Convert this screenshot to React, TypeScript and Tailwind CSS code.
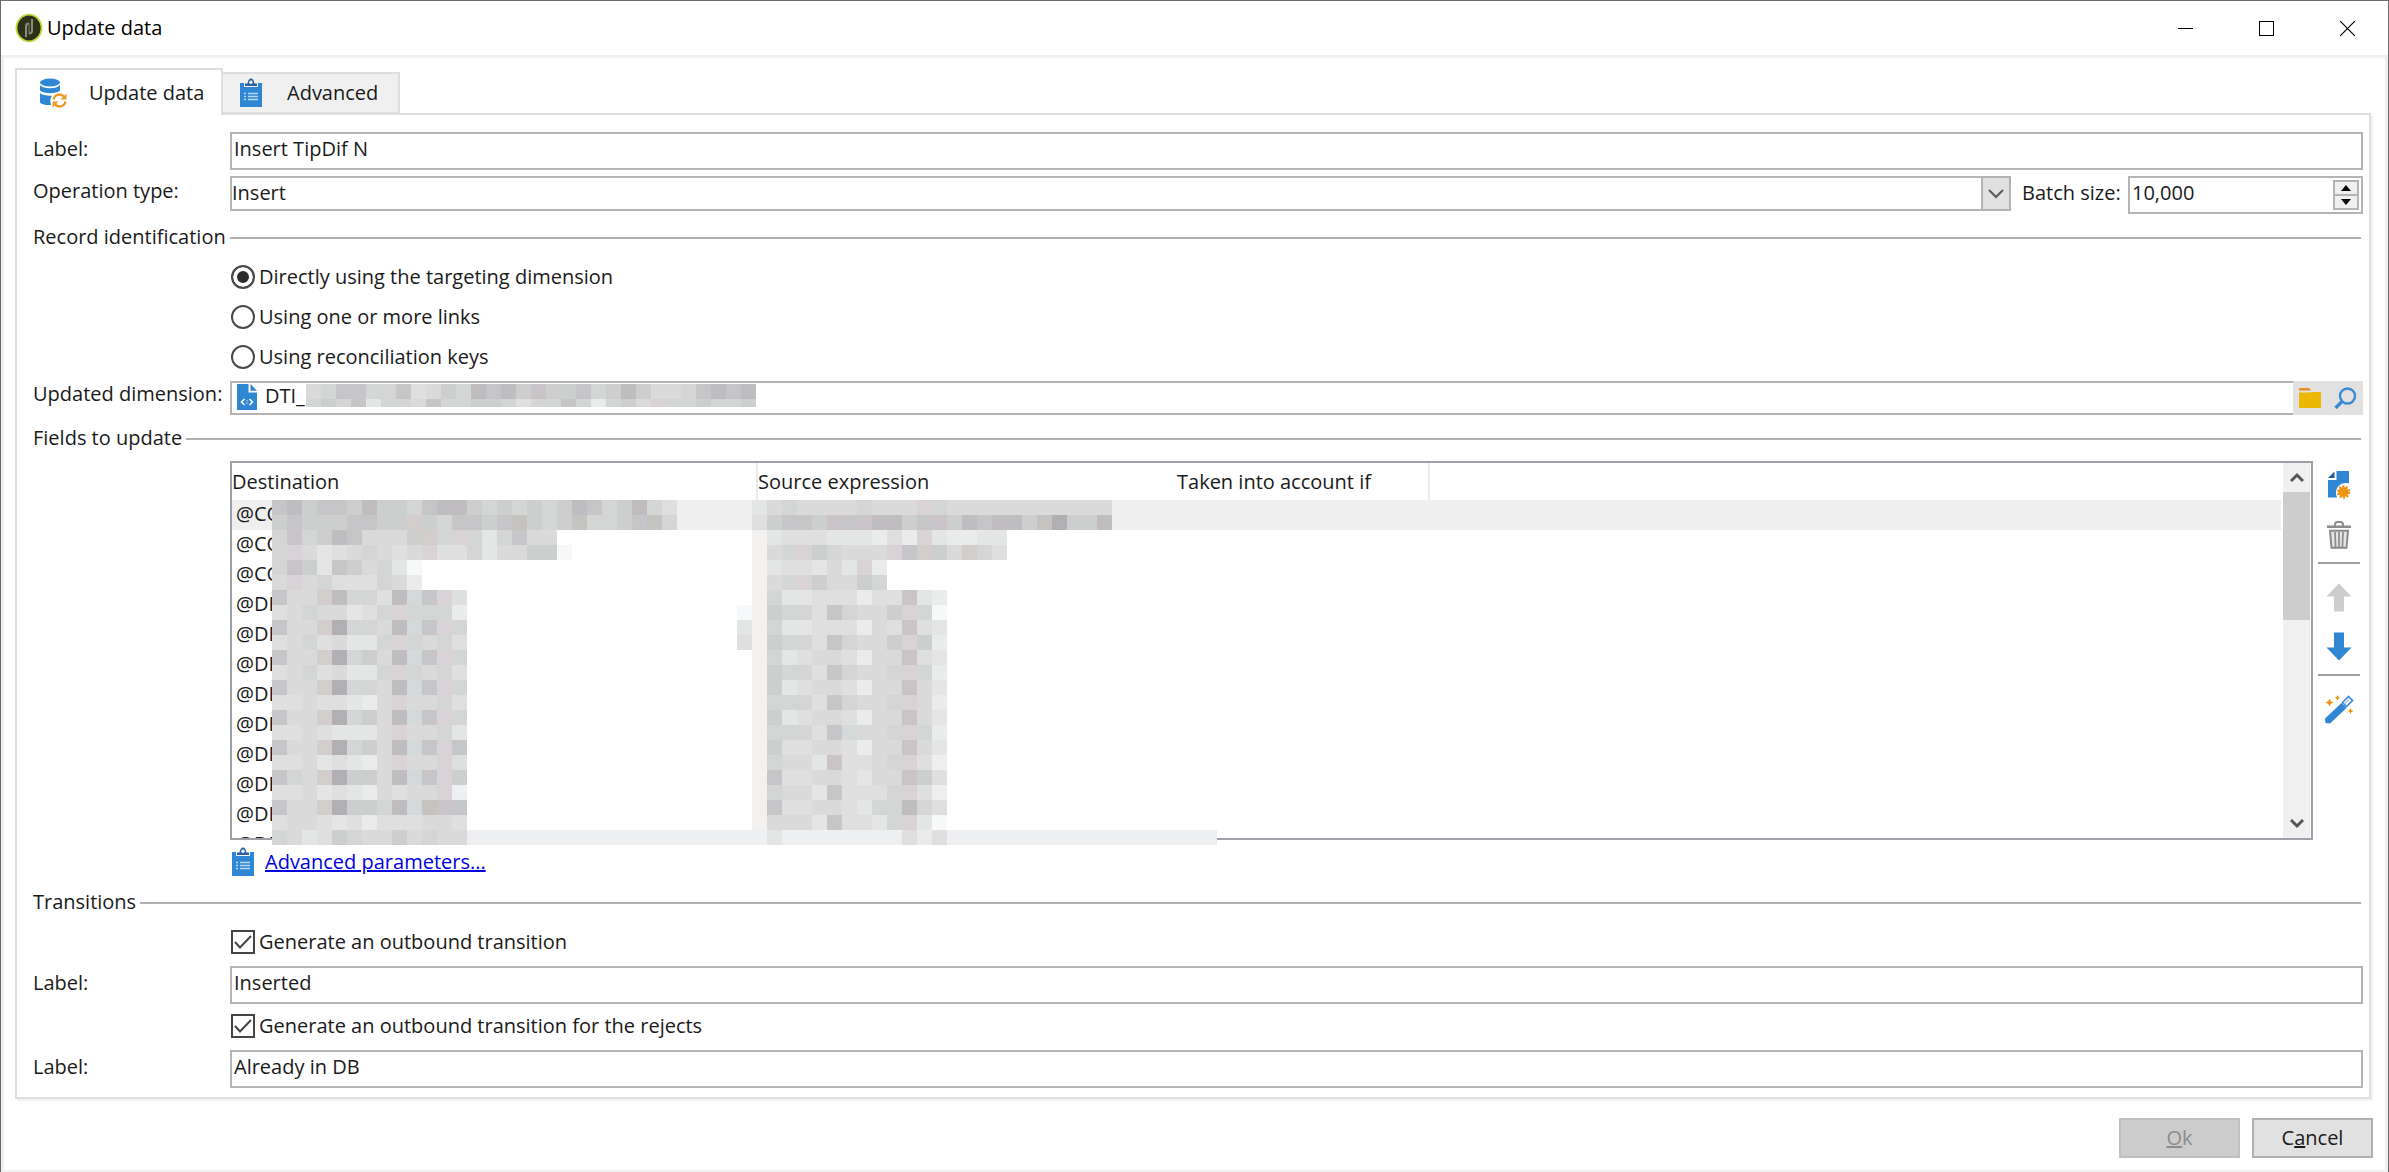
import { useState } from "react";
import type { ReactNode } from "react";
import clsx from "clsx";

// Greys used by the redaction tiles, one letter per tile
const tileColors: Record<string, string> = {
  A: "#b1aeb4",
  B: "#bfbdc0",
  C: "#c6c6c8",
  D: "#cdcece",
  E: "#d4d5d5",
  F: "#dadada",
  G: "#dfdfe0",
  H: "#e4e5e5",
  I: "#eaebeb",
  J: "#f2f1ef",
  K: "#f7f8fa",
  L: "#eeeff1",
  p: "#d9d3d7",
  q: "#cac3c8",
  t: "#d3cecb",
  b: "#d4d9d9",
  c: "#c5c3bf",
};

const TILE = 15;

const dimensionTiles = [
  "FECCEECGFDEBCBDqDDCEDBDFFECBCB",
  "EDECHEEFCEEDDEGEECEIEDFpEEDEED",
];

const listTiles = [
  "CBDCCDBDDECBBDEDEDEDBCEDBEG.....HFEFFFFEFFFpEFFFFFFFFFFF",
  "DCDDDCCDDtDECCDCcDEDcEEDCcE.....GDCCDqCqBBDCqDBCBBDcADDB",
  "EqEDBCFFFDtEpEHECFF.............JHGGGHHHIGIpHIIHH",
  "EpFHGFEFGFpGGEHFFDDK............JFEpDEFFFpCtDFtEG",
  "EqDHCDFEHK......................JHGGHFHpI",
  "FpFEGGGEFI......................JFEpDFFDE",
  "CFFtBEEGBbCpG...................JEHHGGGIGGqHI",
  "GFEFFHGEpEEEI..................KJDEEGCEFFDpEK",
  "CFFtAEEFBbCpE..................HJEHHGGGIFGqGH",
  "GFEGFHHEpEFEG..................GJDEEGCEFFDpDI",
  "CFFtAEDFBbCpE...................JEHGFFGIFFqGH",
  "GFEGFHHEpEFEG...................JDEEGCEFFEpEI",
  "CFFtAEEFBbCpE...................JDHGFFGIFFqFH",
  "GGFGGHIFpFFEG...................JEEEGCEFFEpFI",
  "CFFtAEDFBbCpE...................JDHGFFGIFFqFH",
  "GGFGHHHFpFFEH...................JEEEGCbFFEpEI",
  "CFFtAEDFBbCpC...................JDGGFFGIFFqFH",
  "GGFHGHIFpFFpG...................JEFFHqGGFEpGL",
  "CEFtADDFBbCpD...................JCGGFFGHFFqDG",
  "GGFHGHIFGFFpL...................JEFFHCGGGEpGL",
  "CFFtADDEBbcqC...................JCGGFFGHEEBEG",
  "GFFGHGIGGGFFG...................JFFFHCGGHEpHK",
  "EFHGDEFFDFEFFLLLLLLLLLLLLLLLLLLLLHLLLLLLLLGIGLLLLLLLLLLLLLLLLLL",
];

const fields = [
  "@CO",
  "@CO",
  "@CO",
  "@DE",
  "@DE",
  "@DE",
  "@DE",
  "@DE",
  "@DE",
  "@DE",
  "@DE",
  "@DE",
];

const identificationModes = [
  "Directly using the targeting dimension",
  "Using one or more links",
  "Using reconciliation keys",
];

function Tiles({
  rows,
  height,
  className,
}: {
  rows: string[];
  height: number;
  className?: string;
}) {
  const width = Math.max(...rows.map((row) => row.length)) * TILE;
  return (
    <svg
      width={width}
      height={height}
      shapeRendering="crispEdges"
      aria-hidden="true"
      className={clsx("pointer-events-none shrink-0", className)}
    >
      {rows.map((row, y) =>
        row
          .split("")
          .map((tile, x) =>
            tile === "." ? null : (
              <rect
                key={`${x}-${y}`}
                x={x * TILE}
                y={y * TILE}
                width={TILE}
                height={TILE}
                fill={tileColors[tile]}
              />
            )
          )
      )}
    </svg>
  );
}

function AppLogo() {
  return (
    <svg width="28" height="30" viewBox="0 0 28 30" aria-hidden="true">
      <ellipse cx="14" cy="15" rx="13.5" ry="14.3" fill="#c3da3c" />
      <ellipse cx="14" cy="15" rx="11.6" ry="12.4" fill="#2c3118" />
      <path
        d="M11 24V13.500c0-2 1-3 3-3"
        fill="none"
        stroke="#8b8d7c"
        strokeWidth="2"
      />
      <path
        d="M17 6v11.500c0 2-1 3-3 3"
        fill="none"
        stroke="#8b8d7c"
        strokeWidth="2"
      />
      <path d="M14 10.500v10" stroke="#6a6d58" strokeWidth="1.400" />
    </svg>
  );
}

function DatabaseIcon() {
  return (
    <svg width="28" height="30" viewBox="0 0 28 30" aria-hidden="true" className="shrink-0">
      <g fill="#2f86d3">
        <ellipse cx="11" cy="4.500" rx="10" ry="4" />
        <path d="M1 7c2 2.500 5.500 3.200 10 3.200S19 9.500 21 7v5.500c-2 2-5.500 2.700-10 2.700S3 14.500 1 12.500z" />
        <path d="M1 15c2 2 5.500 2.700 9.500 2.700h2.500c-1.800 2.300-2.200 6-.8 9.300C7 27.300 3 26.500 1 24.500z" />
      </g>
      <g fill="none" stroke="#ee9a28" strokeWidth="2.400">
        <path d="M14.500 21.500c.5-3 3-5 5.800-5 2 0 3.700 1 4.700 2.500" />
        <path d="M26.500 23.500c-.5 3-3 5-5.800 5-2 0-3.700-1-4.700-2.500" />
      </g>
      <path d="M27.500 15.500v6h-6zM13.500 29.500v-6h6z" fill="#ee9a28" />
    </svg>
  );
}

function ClipboardIcon() {
  return (
    <svg width="24" height="30" viewBox="0 0 24 30" aria-hidden="true" className="shrink-0">
      <path d="M1 5h4v4h14V5h4v24H1z" fill="#2f86d3" />
      <path d="M6 8V5.500h2.500C9 2.500 10 .5 12 .5s3 2 3.500 5H18V8z" fill="#2a63a3" />
      <circle cx="12" cy="4.300" r="1.700" fill="#fff" />
      <path
        d="M5 15.500h2M9 15.500h10M5 18.500h2M9 18.500h10M5 21.500h2M9 21.500h10"
        stroke="#b9d7f1"
        strokeWidth="1.300"
      />
    </svg>
  );
}

function SchemaIcon() {
  return (
    <svg width="20" height="26" viewBox="0 0 20 26" aria-hidden="true">
      <path d="M0 0h11.500v8.500H20V26H0z" fill="#2f86d3" />
      <path d="M13.500 0 20 6.800h-6.500z" fill="#2f86d3" />
      <path
        d="M7.500 15 4.500 18l3 3M12.500 15l3 3-3 3M10 16.500v.8M10 18.800v.8"
        fill="none"
        stroke="#fff"
        strokeWidth="1.500"
      />
    </svg>
  );
}

function FolderIcon() {
  return (
    <svg width="22" height="20" viewBox="0 0 22 20" aria-hidden="true">
      <path d="M0 0h10l2 2.500H0z" fill="#ec8f1c" />
      <path d="M0 4.500h12V4h10v16H0z" fill="#ecb805" />
    </svg>
  );
}

function SearchIcon() {
  return (
    <svg width="23" height="23" viewBox="0 0 23 23" aria-hidden="true">
      <circle cx="13.500" cy="9" r="7.500" fill="none" stroke="#3a8bd2" strokeWidth="2.400" />
      <path d="m8 14.500-6.500 6.500" stroke="#3a8bd2" strokeWidth="3.400" />
    </svg>
  );
}

function AddIcon() {
  return (
    <svg width="24" height="28" viewBox="0 0 24 28" aria-hidden="true">
      <path d="M9.500 0H22v12.500c-7-2-13.500 3-13 10 .1 1.600.6 3 1.200 4H1V9h8.500z" fill="#2f86d3" />
      <path d="M7.500 .5v6.500H1z" fill="#1f5f9f" />
      <circle cx="16.500" cy="21" r="5" fill="#ee9410" />
      <circle
        cx="16.500"
        cy="21"
        r="5.500"
        fill="none"
        stroke="#ee9410"
        strokeWidth="2.400"
        strokeDasharray="1.900 1.556"
      />
    </svg>
  );
}

function TrashIcon() {
  return (
    <svg width="26" height="28" viewBox="0 0 26 28" aria-hidden="true">
      <path d="M9 5V3.500C9 2 10 1 11.500 1h3C16 1 17 2 17 3.500V5" fill="none" stroke="#8b8b8b" strokeWidth="2" />
      <path d="M1 4.500h24V7H1z" fill="#8b8b8b" />
      <path
        d="M4 9.800h18l-1.500 17h-15z"
        fill="#e4e4e4"
        stroke="#8b8b8b"
        strokeWidth="2"
      />
      <path d="M9 11l.6 15M13 11v15M17 11l-.6 15" stroke="#8b8b8b" strokeWidth="1.700" />
    </svg>
  );
}

function ArrowIcon({ down }: { down?: boolean }) {
  return (
    <svg width="26" height="29" viewBox="0 0 26 29" aria-hidden="true">
      {down ? (
        <path d="M8 .5h10v15h7.500L13 28.500.5 15.500H8z" fill="#2f86d3" />
      ) : (
        <path d="M8 28.500h10v-15h7.500L13 .5.5 13.500H8z" fill="#cdcdcd" />
      )}
    </svg>
  );
}

function WandIcon() {
  return (
    <svg width="30" height="29" viewBox="0 0 30 29" aria-hidden="true">
      <path d="M1 23.500 17.500 8l5 5L6 28.500 1.500 28z" fill="#2f86d3" />
      <path d="m18.500 7.500 6-6 4 4-6 6z" fill="#fff" stroke="#3a8bd2" strokeWidth="1.600" />
      <path d="m21 8.500 4-4" stroke="#9cc4e8" strokeWidth="1.400" />
      <g fill="#ee9410">
        <path d="m5.500 3.500 1.300 2.700L9.500 7.500 6.800 8.800 5.500 11.500 4.200 8.800 1.500 7.500l2.700-1.300z" />
        <path d="m13.500 0 .9 1.900 1.900.9-1.900.9-.9 1.900-.9-1.900-1.900-.9 1.900-.9z" />
        <path d="m26.500 13 .9 2.100 2.100.9-2.100.9-.9 2.100-.9-2.100-2.100-.9 2.100-.9z" />
      </g>
    </svg>
  );
}

function ScrollArrow({ down }: { down?: boolean }) {
  return (
    <svg width="14" height="11" viewBox="0 0 14 11" aria-hidden="true">
      <path
        d={down ? "M1 2l6 6 6-6" : "M1 9l6-6 6 6"}
        fill="none"
        stroke="#555"
        strokeWidth="3"
      />
    </svg>
  );
}

function SectionHeading({ children, className }: { children: ReactNode; className?: string }) {
  return (
    <div className={clsx("flex h-[26px] items-center gap-1 pr-0.5", className)}>
      <h2 className="pb-0.5">{children}</h2>
      <div className="h-0.5 flex-1 bg-[#b0b0b0]" />
    </div>
  );
}

function TextRow({ id, defaultValue, className }: { id: string; defaultValue: string; className?: string }) {
  return (
    <div className={clsx("flex h-[38px]", className)}>
      <label htmlFor={id} className="w-[197px] pt-1">
        Label:
      </label>
      <input
        id={id}
        defaultValue={defaultValue}
        className="min-w-0 flex-1 border-2 border-[#b4b4b4] bg-white px-0.5 pb-1 outline-none"
      />
    </div>
  );
}

function CheckRow({ label, className }: { label: string; className?: string }) {
  return (
    <label className={clsx("ml-[198px] flex h-10 w-fit items-center gap-1", className)}>
      <span className="relative size-6">
        <input
          type="checkbox"
          defaultChecked
          className="peer block size-6 appearance-none border-2 border-[#444] bg-white"
        />
        <svg
          viewBox="0 0 24 24"
          aria-hidden="true"
          className="pointer-events-none absolute inset-0 hidden size-6 peer-checked:block"
        >
          <path d="m4 12 5 5.500L20 6" fill="none" stroke="#444" strokeWidth="2" />
        </svg>
      </span>
      {label}
    </label>
  );
}

export default function App() {
  const [mode, setMode] = useState(identificationModes[0]);

  return (
    <div className="flex min-h-screen flex-col border-x border-t border-[#6b6b6b] bg-white font-['Open_Sans','Noto_Sans',sans-serif] text-[20px] leading-[26px] text-[#1a1a1a]">
      {/* Title bar */}
      <header className="flex h-[54px] items-center pl-3.5 text-black">
        <AppLogo />
        <h1 className="ml-1 flex-1">Update data</h1>
        <button aria-label="Minimize" className="flex h-full w-[81px] items-center justify-center">
          <svg width="15" height="15" shapeRendering="crispEdges">
            <path d="M0 7h15v1H0z" />
          </svg>
        </button>
        <button aria-label="Maximize" className="flex h-full w-[81px] items-center justify-center">
          <svg width="15" height="15" shapeRendering="crispEdges">
            <rect x="0.5" y="0.5" width="14" height="14" fill="none" stroke="#000" />
          </svg>
        </button>
        <button aria-label="Close" className="flex h-full w-[81px] items-center justify-center">
          <svg width="15" height="15">
            <path d="m0 0 15 15M15 0 0 15" stroke="#000" strokeWidth="1.200" />
          </svg>
        </button>
      </header>

      <main className="flex flex-1 flex-col border-[3px] border-[#f0f0f0] pt-2.5 pr-3 pb-3 pl-2.5">
        {/* Tabs */}
        <div role="tablist" className="flex items-end pl-px">
          <button
            role="tab"
            aria-selected="true"
            className="z-10 -mb-0.5 flex h-[47px] w-[208px] items-center border-2 border-b-0 border-[#dedede] bg-white pl-[22px]"
          >
            <DatabaseIcon />
            <span className="ml-[22px]">Update data</span>
          </button>
          <button
            role="tab"
            aria-selected="false"
            className="-mb-px flex h-[42px] w-[177px] items-center border-2 border-l-0 border-[#dedede] bg-[#f0f0f0] pl-4"
          >
            <ClipboardIcon />
            <span className="ml-6">Advanced</span>
          </button>
        </div>

        <div className="mr-0.5 ml-px border-2 border-[#dedede] pt-[17px] pr-1.5 pb-[9px] pl-4 shadow-[2px_2px_0_#f3f3f3]">
          <TextRow id="label" defaultValue="Insert TipDif N" />

          <div className="mt-1.5 flex h-[38px]">
            <label htmlFor="operation" className="w-[197px] pt-0.5">
              Operation type:
            </label>
            <div className="relative h-[35px] flex-1">
              <select
                id="operation"
                className="block h-full w-full appearance-none border-2 border-[#b4b4b4] bg-white pb-0.5 outline-none"
              >
                <option>Insert</option>
                <option>Update</option>
              </select>
              <div className="pointer-events-none absolute inset-y-0 right-0 flex w-[30px] items-center justify-center border-2 border-[#b4b4b4] bg-[#e1e1e1]">
                <svg width="16" height="10" viewBox="0 0 16 10">
                  <path d="m1 1 7 7 7-7" fill="none" stroke="#5a5a5a" strokeWidth="2" />
                </svg>
              </div>
            </div>
            <label htmlFor="batch" className="w-[117px] pt-1 pl-[11px] whitespace-nowrap">
              Batch size:
            </label>
            <div className="flex w-[235px] border-2 border-[#b4b4b4] p-0.5">
              <input id="batch" defaultValue="10,000" className="min-w-0 flex-1 pb-1 outline-none" />
              <div className="flex w-[26px] flex-col">
                <button
                  aria-label="Increase"
                  className="flex flex-1 items-center justify-center border-2 border-b border-[#b4b4b4] bg-[#f0f0f0]"
                >
                  <svg width="10" height="6">
                    <path d="M5 0l5 6H0z" />
                  </svg>
                </button>
                <button
                  aria-label="Decrease"
                  className="flex flex-1 items-center justify-center border-2 border-t border-[#b4b4b4] bg-[#f0f0f0]"
                >
                  <svg width="10" height="6">
                    <path d="M0 0h10L5 6z" />
                  </svg>
                </button>
              </div>
            </div>
          </div>

          <SectionHeading className="mt-[11px]">Record identification</SectionHeading>
          <div className="mt-1.5 ml-[198px] flex flex-col items-start">
            {identificationModes.map((item) => (
              <label key={item} className="flex h-10 items-center gap-1">
                <input
                  type="radio"
                  name="identification"
                  checked={mode === item}
                  onChange={() => setMode(item)}
                  className="size-6 appearance-none rounded-full border-2 border-[#4a4a4a] bg-white checked:bg-[#2b2b2b] checked:shadow-[inset_0_0_0_4px_white]"
                />
                {item}
              </label>
            ))}
          </div>

          <div className="mt-1 flex h-[34px]">
            <label htmlFor="dimension" className="w-[197px] whitespace-nowrap">
              Updated dimension:
            </label>
            <div className="flex flex-1 border-2 border-r-0 border-[#b4b4b4] pt-px pl-[5px]">
              <SchemaIcon />
              <input
                id="dimension"
                defaultValue="DTI_"
                className="ml-2 h-6 w-[41px] outline-none"
              />
              <Tiles rows={dimensionTiles} height={23} />
            </div>
            <div className="flex w-[70px] items-center justify-around bg-[#e1e1e1]">
              <button aria-label="Choose folder">
                <FolderIcon />
              </button>
              <button aria-label="Search">
                <SearchIcon />
              </button>
            </div>
          </div>

          <SectionHeading className="mt-[11px]">Fields to update</SectionHeading>

          {/* Field list and its toolbar */}
          <div className="mt-[9px] ml-[197px] flex">
            <div className="relative h-[379px] flex-1 border-2 border-[#a0a0a8]">
              <div className="flex h-full">
                <div className="h-full flex-1 overflow-hidden pr-0.5">
                  <table className="w-full table-fixed border-collapse text-left">
                    <thead>
                      <tr className="h-[37px]">
                        <th className="w-[525px] border-r-2 border-[#ebebeb] p-0 font-normal">Destination</th>
                        <th className="w-[420px] p-0 font-normal">Source expression</th>
                        <th className="w-[252px] border-r-2 border-[#ebebeb] p-0 font-normal">
                          Taken into account if
                        </th>
                        <th className="p-0" />
                      </tr>
                    </thead>
                    <tbody>
                      {fields.map((field, index) => (
                        <tr key={index} className={clsx("h-[30px]", index === 0 && "bg-[#efefef]")}>
                          <td className="p-0 pb-0.5 pl-1">{field}</td>
                          <td className="p-0" />
                          <td className="p-0" />
                          <td className="p-0" />
                        </tr>
                      ))}
                    </tbody>
                  </table>
                </div>
                <div className="mr-px flex w-[27px] flex-col bg-[#f0f0f0]">
                  <button aria-label="Scroll up" className="flex h-[29px] items-center justify-center">
                    <ScrollArrow />
                  </button>
                  <div className="h-32 bg-[#cdcdcd]" />
                  <button aria-label="Scroll down" className="mt-auto flex h-[29px] items-center justify-center">
                    <ScrollArrow down />
                  </button>
                </div>
              </div>
              <Tiles rows={listTiles} height={345} className="absolute top-[37px] left-10" />
            </div>
            <div className="flex w-[50px] flex-col items-center pl-0.5">
              <button aria-label="Add" className="mt-2.5">
                <AddIcon />
              </button>
              <button aria-label="Delete" className="mt-[22px]">
                <TrashIcon />
              </button>
              <hr className="mt-[13px] w-[42px] border-t-2 border-[#a0a0a0]" />
              <button aria-label="Move up" className="mt-[19px]">
                <ArrowIcon />
              </button>
              <button aria-label="Move down" className="mt-5">
                <ArrowIcon down />
              </button>
              <hr className="mt-[13px] w-[42px] border-t-2 border-[#a0a0a0]" />
              <button aria-label="Edit expression" className="mt-[19px]">
                <WandIcon />
              </button>
            </div>
          </div>

          <div className="mt-[7px] ml-[198px] flex h-[30px] items-center gap-2.5">
            <ClipboardIcon />
            <a href="#advanced" className="text-[#0000e6] underline">
              Advanced parameters...
            </a>
          </div>

          <SectionHeading className="mt-[13px]">Transitions</SectionHeading>
          <CheckRow label="Generate an outbound transition" className="mt-1.5" />
          <TextRow id="inserted-label" defaultValue="Inserted" className="mt-1" />
          <CheckRow label="Generate an outbound transition for the rejects" className="mt-0.5" />
          <TextRow id="rejects-label" defaultValue="Already in DB" className="mt-1" />
        </div>

        {/* Dialog buttons */}
        <div className="mt-[19px] flex justify-end gap-3">
          <button disabled className="h-10 w-[121px] border-2 border-[#c0c0c0] bg-[#cccccc] text-[#8c8c8c]">
            <span className="underline">O</span>k
          </button>
          <button className="h-10 w-[121px] border-2 border-[#b0b0b0] bg-[#e1e1e1]">
            C<span className="underline">a</span>ncel
          </button>
        </div>
      </main>
    </div>
  );
}
